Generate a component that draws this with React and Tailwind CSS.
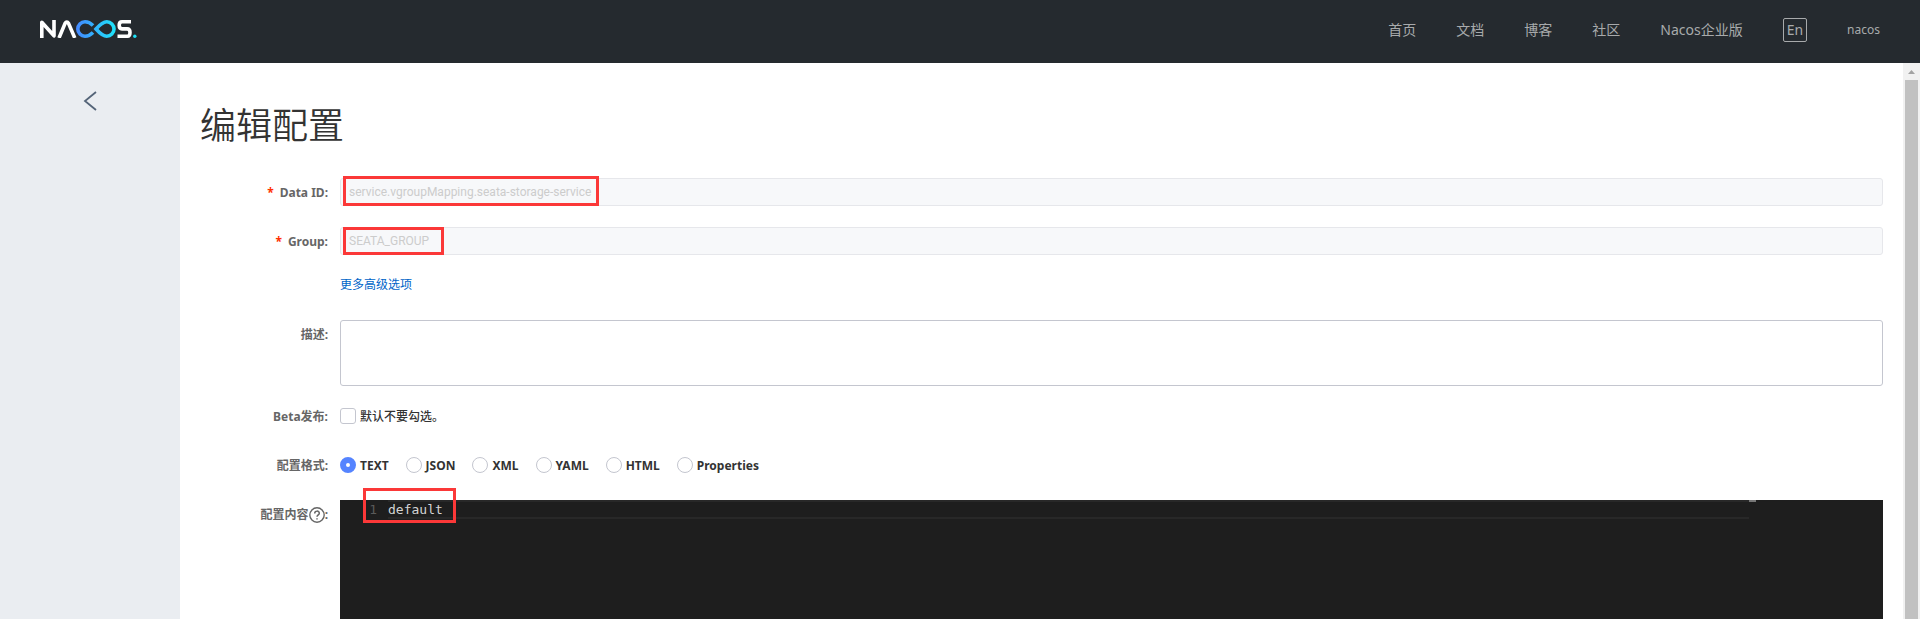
const nav = ['首页', '文档', '博客', '社区', 'Nacos企业版'];
const formats = ['TEXT', 'JSON', 'XML', 'YAML', 'HTML', 'Properties'];

function Logo() {
  return (
    <svg width="97" height="18" viewBox="0 0 97 18" fill="none" role="img" aria-label="Nacos">
      <defs>
        <linearGradient id="loop" x1="36" y1="0" x2="75" y2="0" gradientUnits="userSpaceOnUse">
          <stop offset="0" stopColor="#4487ff" />
          <stop offset="1" stopColor="#1ee3fa" />
        </linearGradient>
      </defs>
      <path d="M1.8 18V2.2L14 15.8V0" stroke="#fff" strokeWidth="3.6" strokeLinejoin="round" />
      <path d="M19 18L25 3.5Q26.8 .4 28.6 3.5L34.8 18" stroke="#fff" strokeWidth="3.6" />
      <path d="M53 5.5C50.5 3 48.3 1.8 45 1.8A7.2 7.2 0 0 0 45 16.2C48.3 16.2 50.5 15 53 12.5" stroke="url(#loop)" strokeWidth="3.6" />
      <path d="M56 9C60 4.5 63 1.8 66.8 1.8A7.2 7.2 0 0 1 66.8 16.2C63 16.2 60 13.5 56 9Z" stroke="url(#loop)" strokeWidth="3.6" />
      <path d="M91 1.8H82Q79.2 1.8 79.2 5.3T82 8.9H87.2Q90 8.9 90 12.6T87.2 16.2H77.5" stroke="#fff" strokeWidth="3.6" />
      <circle cx="94.8" cy="16.3" r="1.7" fill="#1ee3fa" />
    </svg>
  );
}

function Row({ label, htmlFor, required, children, className = 'mt-[21px]' }) {
  return (
    <div className={`flex items-start ${className}`}>
      <label htmlFor={htmlFor} className="flex h-7 w-35 shrink-0 items-center justify-end pt-0.5 pr-3 font-bold text-[#666]">
        {required && <span className="mr-1.5 text-[#ff3000]">*</span>}
        {label}
      </label>
      <div className="relative min-w-0 flex-1">{children}</div>
    </div>
  );
}

function HelpIcon() {
  return (
    <svg width="16" height="16" viewBox="0 0 16 16" fill="none" stroke="#666" strokeWidth="1.4" aria-hidden="true">
      <circle cx="8" cy="8" r="7.2" />
      <path d="M5.7 6.4C5.7 3.4 10.3 3.4 10.3 6.2C10.3 7.8 8 8 8 9.8M8 11.2V12.6" strokeWidth="1.5" />
    </svg>
  );
}

const field = 'block h-7 w-full rounded-[3px] border border-[#e6e7eb] bg-[#f7f8fa] px-2 font-[Roboto,sans-serif] text-[#ccc]';

export default function App() {
  return (
    <div className="flex h-screen flex-col overflow-hidden bg-white font-['Noto_Sans','Noto_Sans_CJK_SC',sans-serif] text-xs text-[#333]">
      <header className="flex h-[63px] shrink-0 items-center justify-between bg-[#252a2f] px-10 pb-1 text-[#a8aaac]">
        <a href="#home" className="pb-0.5"><Logo /></a>
        <nav className="flex items-center gap-10 text-sm">
          {nav.map((item) => <a key={item} href="#nav">{item}</a>)}
          <button className="h-6 rounded-xs border border-[#a8aaac] px-[3px] leading-5">En</button>
          <a href="#user" className="text-xs">nacos</a>
        </nav>
      </header>

      <div className="flex min-h-0 flex-1">
        <aside className="flex w-45 shrink-0 items-start justify-center bg-[#eaedf1] pt-7">
          <button aria-label="返回">
            <svg width="14" height="20" viewBox="0 0 14 20" fill="none" stroke="#546478" strokeWidth="1.8">
              <path d="M13 1L2 10L13 19" />
            </svg>
          </button>
        </aside>

        <main className="min-w-0 flex-1 overflow-hidden px-5 pt-9">
          <h1 className="text-4xl leading-[54px] font-[350]">编辑配置</h1>
          <form>
            <Row label="Data ID:" htmlFor="dataId" required className="mt-[25px]">
              <input id="dataId" className={field} disabled defaultValue="service.vgroupMapping.seata-storage-service" />
              <div className="absolute -top-0.5 left-[3px] h-[30px] w-64 border-3 border-[#fb3838]" />
            </Row>
            <Row label="Group:" htmlFor="group" required>
              <input id="group" className={field} disabled defaultValue="SEATA_GROUP" />
              <div className="absolute top-0 left-[3px] h-7 w-[101px] border-3 border-[#fb3838]" />
            </Row>
            <Row className="mt-4">
              <a href="#more" className="block leading-7 text-[#0064c8]">更多高级选项</a>
            </Row>
            <Row label="描述:" htmlFor="desc">
              <textarea id="desc" className="block h-[66px] w-full resize-none rounded-[3px] border border-[#c4c6cf] px-2" />
            </Row>
            <Row label="Beta发布:" htmlFor="beta" className="mt-4">
              <div className="flex h-7 items-center gap-1 font-medium">
                <input id="beta" type="checkbox" className="size-4 appearance-none rounded-[3px] border border-[#c4c6cf]" />
                <label htmlFor="beta" className="pt-0.5">默认不要勾选。</label>
              </div>
            </Row>
            <Row label="配置格式:">
              <div className="flex h-7 items-center gap-[17px] font-bold">
                {formats.map((name, i) => (
                  <label key={name} className="flex items-center gap-1">
                    <input
                      type="radio"
                      name="format"
                      defaultChecked={i === 0}
                      className="size-4 appearance-none rounded-full border border-[#c4c6cf] checked:border-6 checked:border-[#5584ff]"
                    />
                    <span className="pt-0.5">{name}</span>
                  </label>
                ))}
              </div>
            </Row>
            <Row label={<>配置内容<HelpIcon />:</>} htmlFor="content">
              <div className="flex h-75 bg-[#1e1e1e] font-['DejaVu_Sans_Mono',monospace] text-[13px] leading-[19px]">
                <span className="w-12 pr-[11px] text-right text-[#5a5a5a]">1</span>
                <textarea
                  id="content"
                  defaultValue="default"
                  className="h-[19px] flex-1 resize-none overflow-hidden border-y-2 border-[#282828] leading-[15px] text-[#d4d4d4]"
                />
                <div className="flex w-[134px] justify-start"><span className="h-0.5 w-[7px] bg-[#777]" /></div>
              </div>
              <div className="absolute -top-3 left-[23px] h-[35px] w-[93px] border-3 border-[#fb3838]" />
            </Row>
          </form>
        </main>

        <div aria-hidden="true" className="flex w-[17px] shrink-0 flex-col items-center bg-[#f1f1f1]">
          <div className="flex h-[17px] shrink-0 items-center">
            <svg width="7" height="4" viewBox="0 0 7 4" fill="#a3a3a3"><path d="M3.5 0L7 4H0Z" /></svg>
          </div>
          <div className="w-[13px] flex-1 bg-[#c1c1c1]" />
        </div>
      </div>
    </div>
  );
}
